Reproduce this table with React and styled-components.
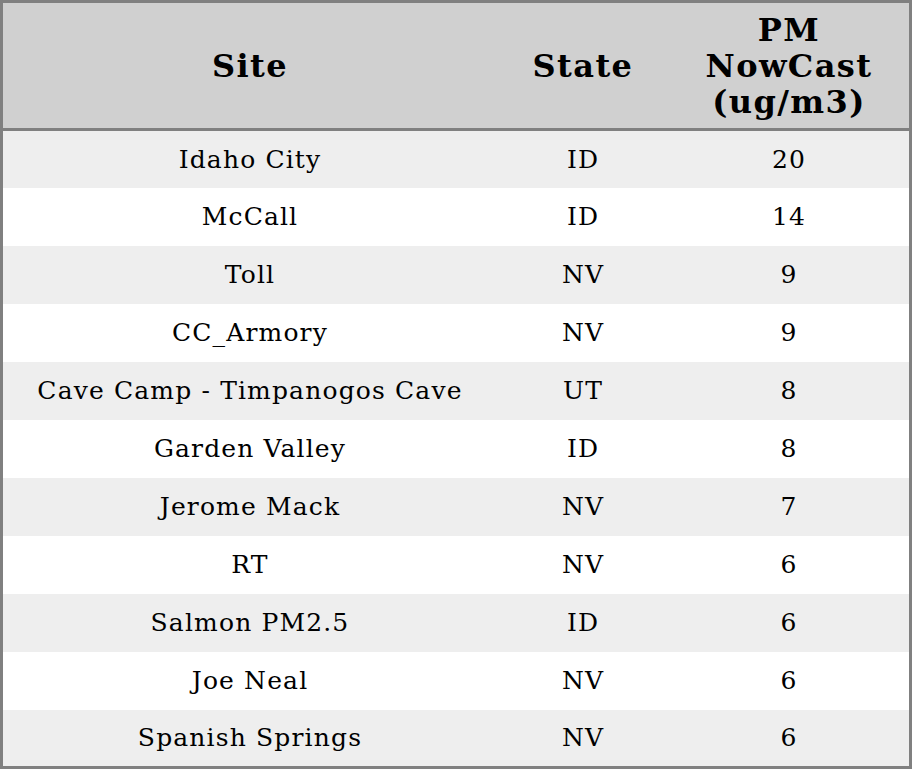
import React from "react";
import styled, { createGlobalStyle } from "styled-components";

const rows = [
  ["Idaho City", "ID", 20],
  ["McCall", "ID", 14],
  ["Toll", "NV", 9],
  ["CC_Armory", "NV", 9],
  ["Cave Camp - Timpanogos Cave", "UT", 8],
  ["Garden Valley", "ID", 8],
  ["Jerome Mack", "NV", 7],
  ["RT", "NV", 6],
  ["Salmon PM2.5", "ID", 6],
  ["Joe Neal", "NV", 6],
  ["Spanish Springs", "NV", 6],
];

const GlobalStyle = createGlobalStyle`
  body {
    margin: 0;
    background: #ffffff;
    font-family: "DejaVu Serif", serif;
  }
`;

const Table = styled.table`
  width: 912px;
  height: 769px;
  border-collapse: collapse;
  border: 3px solid #808080;
  table-layout: fixed;
  color: #000;
`;

const Head = styled.th`
  width: ${({ w }) => w}px;
  height: 125px;
  background: #d0d0d0;
  border-bottom: 3px solid #808080;
  font-size: 32px;
  font-weight: bold;
  letter-spacing: 1.4px;
  line-height: 36px;
  text-align: center;
  vertical-align: middle;
  padding: 0;
`;

const Row = styled.tr`
  height: 58px;
  background: ${({ odd }) => (odd ? "#eeeeee" : "#ffffff")};
`;

const Cell = styled.td`
  font-size: 25px;
  letter-spacing: 1.15px;
  text-align: center;
  vertical-align: middle;
  padding: 0;
`;

export default function App() {
  return (
    <>
      <GlobalStyle />
      <Table>
        <thead>
          <tr>
            <Head w={494}>Site</Head>
            <Head w={172}>State</Head>
            <Head w={240}>
              PM
              <br />
              NowCast
              <br />
              (ug/m3)
            </Head>
          </tr>
        </thead>
        <tbody>
          {rows.map(([site, state, val], i) => (
            <Row key={site} odd={i % 2 === 0}>
              <Cell>{site}</Cell>
              <Cell>{state}</Cell>
              <Cell>{val}</Cell>
            </Row>
          ))}
        </tbody>
      </Table>
    </>
  );
}
